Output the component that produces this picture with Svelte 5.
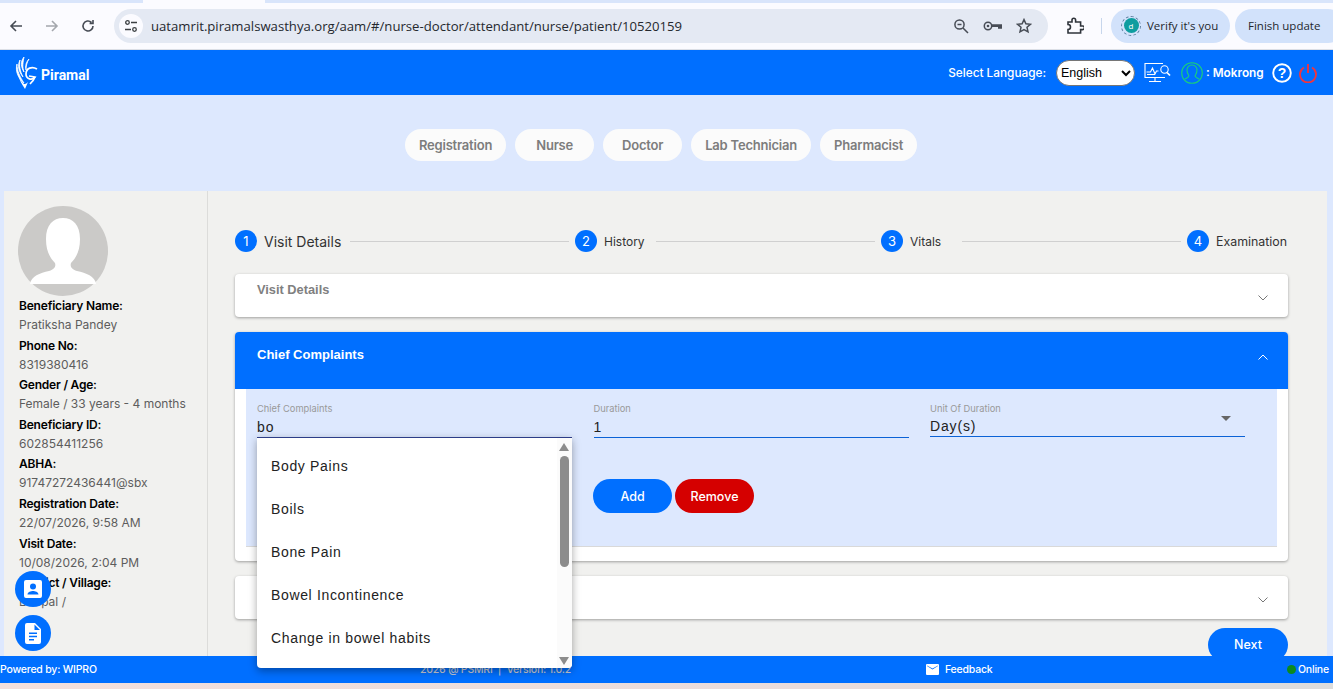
<script>
  const roles = ["Registration", "Nurse", "Doctor", "Lab Technician", "Pharmacist"];
  const steps = [
    { name: "Visit Details", width: 86 },
    { name: "History", width: 52 },
    { name: "Vitals", width: 52 },
    { name: "Examination", width: 72 },
  ];
  const info = [
    ["Beneficiary Name:", "Pratiksha Pandey"],
    ["Phone No:", "8319380416"],
    ["Gender / Age:", "Female / 33 years - 4 months"],
    ["Beneficiary ID:", "602854411256"],
    ["ABHA:", "91747272436441@sbx"],
    ["Registration Date:", "22/07/2026, 9:58 AM"],
    ["Visit Date:", "10/08/2026, 2:04 PM"],
    ["District / Village:", "Bhopal /"],
  ];
  const options = ["Body Pains", "Boils", "Bone Pain", "Bowel Incontinence", "Change in bowel habits"];
</script>

<div class="page">
  <div class="tabstrip"><span class="activetab"></span></div>
  <div class="chrome">
    <svg class="nav-icon first" viewBox="0 0 16 16"><path d="M14 8H3M8 3L3 8l5 5" fill="none" stroke="#474c55" stroke-width="1.6"/></svg>
    <svg class="nav-icon" viewBox="0 0 16 16"><path d="M2 8h11M8 3l5 5-5 5" fill="none" stroke="#a4a7ad" stroke-width="1.6"/></svg>
    <svg class="nav-icon" viewBox="0 0 16 16"><path d="M13 8a5 5 0 1 1-1.6-3.7M13 2v3.4H9.6" fill="none" stroke="#474c55" stroke-width="1.6"/></svg>
    <div class="omnibox">
      <span class="site">
        <svg width="14" height="14" viewBox="0 0 14 14"><g fill="none" stroke="#3c4043" stroke-width="1.3"><circle cx="3.5" cy="3.5" r="1.8"/><path d="M7 3.5h6M1 10.5h6"/><circle cx="10.5" cy="10.5" r="1.8"/></g></svg>
      </span>
      <span class="url">uatamrit.piramalswasthya.org/aam/#/nurse-doctor/attendant/nurse/patient/10520159</span>
      <svg class="omni-a" width="16" height="16" viewBox="0 0 16 16"><g fill="none" stroke="#474c55" stroke-width="1.5"><circle cx="6.5" cy="6.5" r="4.6"/><path d="M10 10l5 5M4.5 6.5h4"/></g></svg>
      <svg class="omni-b" width="20" height="14" viewBox="0 0 20 14"><circle cx="5" cy="7" r="3.700" fill="none" stroke="#474c55" stroke-width="1.500"/><circle cx="5" cy="7" r="1.300" fill="#474c55"/><path d="M8.500 5.200H19v4.600h-4V8H8.500z" fill="#474c55"/></svg>
      <svg class="omni-c" width="16" height="16" viewBox="0 0 16 16"><path d="M8 1.6l1.900 4.200 4.500.5-3.400 3 1 4.500L8 11.500l-4 2.300 1-4.500-3.400-3 4.500-.5z" fill="none" stroke="#474c55" stroke-width="1.500"/></svg>
    </div>
    <svg class="ext" width="18" height="18" viewBox="0 0 18 18"><path d="M2 5h4V3a1.800 1.800 0 0 1 3.600 0v2h5v4h2a1.800 1.800 0 0 1 0 3.600h-2V16H2v-3.500a2.500 2.500 0 0 0 0-5z" fill="none" stroke="#2f343b" stroke-width="1.600"/></svg>
    <span class="divider"></span>
    <span class="pill verify">
      <span class="ring"><span class="avatar-d">d</span></span>
      Verify it's you
    </span>
    <span class="pill update">Finish update</span>
  </div>

  <header>
    <div class="logo">
      <svg width="24" height="34" viewBox="0 0 24 34">
        <g fill="#fff">
          <path d="M9 1C5 6 6 11 9 16 7 11 8 6 9 1z" stroke="#fff" stroke-width=".8"/>
          <path d="M5 4C2 10 4 16 8 21 5 15 4 10 5 4z" stroke="#fff" stroke-width=".8"/>
          <path d="M2 8c-2 7 1 14 7 19-4-6-7-12-7-19z" stroke="#fff" stroke-width=".8"/>
          <path d="M14 3c-3 3-4 7-3 11 0-4 1-8 3-11z" stroke="#fff" stroke-width=".8"/>
          <path d="M3 18c1 6 4 10 7 15l3-7c-2 2-3 2-4 2-3-3-5-6-6-10z"/>
        </g>
        <path d="M22 13c-5-3-11-1-11 5 0 5 6 7 9 3l-6-1" fill="none" stroke="#fff" stroke-width="1.700"/>
        <path d="M20 21c-1 3-3 5-5 7" fill="none" stroke="#fff" stroke-width="1.700"/>
      </svg>
      <span>Piramal</span>
    </div>
    <div class="head-right">
      <span class="lang-label">Select Language:</span>
      <select class="lang"><option>English</option></select>
      <svg class="monitor" width="27" height="22" viewBox="0 0 27 22"><g fill="none" stroke="#fff" stroke-width="1.100"><path d="M19 1.500H1v14h20M11 15.500v4M5 19.500h12M2.500 10h4l2-4 2.500 6 1.500-3h2"/><path d="M3 12.500h8"/><circle cx="20.500" cy="7.500" r="3.700"/><path d="M23 10.500l3 3" stroke-width="1.700"/></g></svg>
      <svg class="user" width="22" height="22" viewBox="0 0 22 22"><g fill="none" stroke="#19d07b" stroke-width="1.100"><circle cx="11" cy="11" r="10.300"/><path d="M8 14c-1-2-2-3-2-6a5 5 0 0 1 10 0c0 3-1 4-2 6 1 2 3 2 4 3M8 14c-1 2-3 2-4 3"/></g></svg>
      <span class="username">: Mokrong</span>
      <svg class="help" width="20" height="20" viewBox="0 0 20 20"><circle cx="10" cy="10" r="8.800" fill="none" stroke="#fff" stroke-width="1.900"/><text x="10" y="15" text-anchor="middle" font-size="14" font-weight="700" fill="#fff" font-family="Liberation Sans, sans-serif">?</text></svg>
      <svg class="power" width="18" height="20" viewBox="0 0 18 20"><path d="M5 4.500a8 8 0 1 0 8 0M9 1v9" fill="none" stroke="#ee3540" stroke-width="1.900"/></svg>
    </div>
  </header>

  <nav>
    {#each roles as role}
      <span class="role">{role}</span>
    {/each}
  </nav>

  <div class="panel">
    <aside>
      <div class="photo">
        <svg width="90" height="90" viewBox="0 0 90 90"><circle cx="45" cy="45" r="45" fill="#cbcac8"/><path d="M12 78c1-8 10-11 19-13 6-2 7-5 6-8-5-5-9-12-9-24 0-14 7-21 17-21s17 7 17 21c0 12-4 19-9 24-1 3 0 6 6 8 9 2 18 5 19 13z" fill="#fff"/></svg>
      </div>
      {#each info as [label, value]}
        <div class="label">{label}</div>
        <div class="value">{value}</div>
      {/each}
    </aside>

    <main>
      <div class="stepper">
        {#each steps as step, i}
          {#if i > 0}<span class="line"></span>{/if}
          <span class="num">{i + 1}</span>
          <span class="step" class:big={i === 0} style="min-width: {step.width}px">{step.name}</span>
        {/each}
      </div>

      <section class="card closed">
        <span class="card-title">Visit Details</span>
        <svg class="chev" width="10" height="6" viewBox="0 0 10 6"><path d="M.5.500L5 5 9.500.500" fill="none" stroke="#777" stroke-width="1"/></svg>
      </section>

      <section class="card open">
        <div class="open-head">
          <span>Chief Complaints</span>
          <svg class="chev" width="10" height="6" viewBox="0 0 10 6"><path d="M.5 5.500L5 1l4.500 4.500" fill="none" stroke="#fff" stroke-width="1"/></svg>
        </div>
        <div class="open-body">
          <div class="fields">
            <div class="field">
              <span class="f-label">Chief Complaints</span>
              <div class="f-input dark">bo</div>
            </div>
            <div class="field">
              <span class="f-label">Duration</span>
              <div class="f-input">1</div>
            </div>
            <div class="field">
              <span class="f-label">Unit Of Duration</span>
              <div class="f-input unit">Day(s)<span class="caret"></span></div>
            </div>
          </div>
          <div class="actions">
            <button class="add">Add</button>
            <button class="remove">Remove</button>
          </div>

          <div class="dropdown">
            <ul>
              {#each options as option}
                <li>{option}</li>
              {/each}
            </ul>
            <div class="scroll">
              <span class="arrow up"></span>
              <span class="thumb"></span>
              <span class="arrow down"></span>
            </div>
          </div>
        </div>
      </section>

      <section class="card third">
        <svg class="chev" width="10" height="6" viewBox="0 0 10 6"><path d="M.5.500L5 5 9.500.500" fill="none" stroke="#777" stroke-width="1"/></svg>
      </section>

      <div class="next-row"><button class="next">Next</button></div>
    </main>

    <button class="fab one" aria-label="profile">
      <svg width="20" height="20" viewBox="0 0 20 20"><path fill-rule="evenodd" d="M3 1h14a2 2 0 0 1 2 2v14a2 2 0 0 1-2 2H3a2 2 0 0 1-2-2V3a2 2 0 0 1 2-2zm7 3.500a3 3 0 1 0 0 6 3 3 0 0 0 0-6zM4.500 15.500h11c0-2.500-3.500-3.500-5.500-3.500s-5.500 1-5.500 3.500z" fill="#fff"/></svg>
    </button>
    <button class="fab two" aria-label="document">
      <svg width="18" height="21" viewBox="0 0 18 21"><path fill-rule="evenodd" d="M3 0h8l6 6v13a2 2 0 0 1-2 2H3a2 2 0 0 1-2-2V2a2 2 0 0 1 2-2zm7.500 1.500V7H16zM5 9.500v1.600h8V9.500zm0 3.200v1.600h8v-1.600zm0 3.200v1.600h5v-1.600z" fill="#fff"/></svg>
    </button>
  </div>

  <footer>
    <span class="powered">Powered by: WIPRO</span>
    <span class="copy">2026 @ PSMRI &nbsp;|&nbsp; Version: 1.0.2</span>
    <span class="feedback">
      <svg width="13" height="11" viewBox="0 0 13 11"><path fill-rule="evenodd" d="M1 0h11a1 1 0 0 1 1 1v9a1 1 0 0 1-1 1H1a1 1 0 0 1-1-1V1a1 1 0 0 1 1-1zm0 2l5.500 3.500L12 2v-.5L6.500 4.500 1 1.500z" fill="#fff"/></svg>
      Feedback
    </span>
    <span class="online"><i></i>Online</span>
  </footer>
  <div class="bottom"></div>
</div>

<style>
  :global(body) {
    margin: 0;
    font-family: "Liberation Sans", Arial, sans-serif;
  }

  .page {
    position: relative;
    display: flex;
    flex-direction: column;
    width: 1333px;
    height: 689px;
    overflow: hidden;
    background: #dde8fe;
  }

  .tabstrip {
    height: 3px;
    background: #d9e5fb;
    flex: none;
  }

  .activetab {
    display: block;
    width: 122px;
    height: 3px;
    margin-left: 143px;
    background: #fbfbff;
  }

  .chrome {
    display: flex;
    align-items: center;
    flex: none;
    height: 47px;
    padding-bottom: 1px;
    box-sizing: border-box;
    background: #fbfbff;
    border-bottom: 1px solid #dcdfe6;
  }

  .nav-icon {
    width: 16px;
    height: 16px;
    margin-right: 20px;
    flex: none;
  }

  .nav-icon.first {
    margin-left: 8px;
  }

  .omnibox {
    display: flex;
    align-items: center;
    width: 934px;
    height: 34px;
    margin-left: -2px;
    border-radius: 17px;
    background: #e4e9f3;
    flex: none;
  }

  .site {
    display: flex;
    align-items: center;
    justify-content: center;
    width: 24px;
    height: 24px;
    margin-left: 5px;
    border-radius: 50%;
    background: #fbfbff;
  }

  .url {
    margin-left: 8px;
    font-family: "Open Sans", sans-serif;
    font-size: 13.150px;
    color: #24282e;
    white-space: nowrap;
    flex: 1;
  }

  .omni-a {
    margin-right: 14px;
  }

  .omni-b {
    margin-right: 13px;
  }

  .omni-c {
    margin-right: 16px;
  }

  .ext {
    margin-left: 18px;
    flex: none;
  }

  .divider {
    width: 1px;
    height: 16px;
    margin: 0 9px 0 17px;
    background: #c7d6ec;
    flex: none;
  }

  .pill {
    display: flex;
    align-items: center;
    height: 34px;
    border-radius: 17px;
    background: #d2e2fb;
    font-family: "Open Sans", sans-serif;
    font-size: 11.500px;
    color: #24282e;
    white-space: nowrap;
    flex: none;
  }

  .verify {
    width: 119px;
    gap: 6px;
    padding-left: 10px;
    box-sizing: border-box;
  }

  .update {
    width: 110px;
    margin-left: 5px;
    padding-left: 13px;
    box-sizing: border-box;
  }

  .ring {
    display: flex;
    align-items: center;
    justify-content: center;
    width: 20px;
    height: 20px;
    box-sizing: border-box;
    border: 1px dashed #5b7d9e;
    border-radius: 50%;
  }

  .avatar-d {
    display: flex;
    align-items: center;
    justify-content: center;
    width: 15px;
    height: 15px;
    border-radius: 50%;
    background: #0e9d9f;
    color: #fff;
    font-size: 8px;
  }

  header {
    display: flex;
    align-items: center;
    justify-content: space-between;
    height: 45px;
    background: #006fff;
    flex: none;
  }

  .logo {
    display: flex;
    align-items: center;
    gap: 2px;
    margin-left: 15px;
    color: #fff;
    font-family: Roboto, sans-serif;
    font-size: 14px;
    font-weight: 700;
  }

  .logo span {
    margin-top: 5px;
  }

  .head-right {
    display: flex;
    align-items: center;
    margin-right: 16px;
    color: #fff;
    font-family: Inter, sans-serif;
  }

  .lang-label {
    font-size: 11.800px;
    font-weight: 500;
  }

  .lang {
    width: 79px;
    height: 26px;
    margin-left: 10px;
    padding: 0;
    border: 1px solid #767676;
    border-radius: 13px;
    background: #fff;
    font-family: "Liberation Sans", sans-serif;
    font-size: 12.500px;
  }

  .monitor {
    margin-left: 9px;
  }

  .user {
    margin-left: 10px;
  }

  .username {
    width: 58px;
    margin-left: 3px;
    font-size: 11.800px;
    font-weight: 600;
    white-space: nowrap;
  }

  .help {
    margin-left: 8px;
  }

  .power {
    margin-left: 7px;
  }

  nav {
    display: flex;
    justify-content: center;
    gap: 9px;
    height: 96px;
    padding: 34px 11px 0 0;
    box-sizing: border-box;
    flex: none;
  }

  .role {
    min-width: 79px;
    height: 32px;
    padding: 0 14px;
    box-sizing: border-box;
    text-align: center;
    line-height: 32px;
    border-radius: 16px;
    background: #fbfbfb;
    color: #7d7d7d;
    font-family: Inter, sans-serif;
    font-size: 13px;
    font-weight: 600;
    letter-spacing: -0.2px;
  }

  .panel {
    position: relative;
    z-index: 1;
    display: flex;
    width: 1323px;
    height: 465px;
    margin-left: 4px;
    background: #f1f1ef;
    flex: none;
  }

  aside {
    width: 204px;
    padding: 15px 0 0 15px;
    box-sizing: border-box;
    border-right: 1px solid #dcdcda;
    flex: none;
    font-family: Inter, sans-serif;
  }

  .photo {
    height: 90px;
    margin-left: -1px;
  }

  .photo svg {
    display: block;
  }

  .label {
    height: 19px;
    line-height: 19px;
    color: #000;
    font-size: 12px;
    font-weight: 600;
    letter-spacing: -0.2px;
  }

  .value {
    height: 20.600px;
    line-height: 20px;
    color: #5d5d5d;
    font-size: 12px;
  }

  main {
    flex: 1;
    padding: 0 39px 0 27px;
    box-sizing: border-box;
    min-width: 0;
  }

  .stepper {
    display: flex;
    align-items: center;
    height: 22px;
    margin-top: 39px;
    font-family: Inter, sans-serif;
    font-size: 12px;
    color: #333;
  }

  .num {
    display: flex;
    align-items: center;
    justify-content: center;
    width: 22px;
    height: 22px;
    border-radius: 50%;
    background: #006fff;
    color: #fff;
    font-size: 13px;
    flex: none;
  }

  .step {
    margin-left: 7px;
    white-space: nowrap;
  }

  .step.big {
    font-size: 14px;
  }

  .step:last-child {
    font-size: 12.400px;
  }

  .line {
    flex: 1;
    height: 1px;
    margin-right: 6px;
    background: #d0d0d0;
  }

  .card {
    position: relative;
    margin-top: 15px;
    background: #fff;
    border-radius: 4px;
    box-shadow: 0 1px 3px rgba(0, 0, 0, 0.35);
  }

  .stepper + .card {
    margin-top: 22px;
  }

  .closed {
    height: 43px;
  }

  .card-title {
    position: absolute;
    left: 22px;
    top: 8px;
    color: #808080;
    font-size: 12.800px;
    font-weight: 700;
  }

  .chev {
    position: absolute;
    right: 20px;
    top: 21px;
  }

  .open {
    height: 229px;
  }

  .open-head {
    position: relative;
    height: 57px;
    border-radius: 4px 4px 0 0;
    background: #006fff;
    color: #fff;
    font-size: 13px;
    font-weight: 700;
    padding: 15px 0 0 22px;
    box-sizing: border-box;
  }

  .open-head .chev {
    top: 22px;
  }

  .open-body {
    position: relative;
    height: 157px;
    margin: 0 11px;
    padding: 0 11px;
    background: #dde8fe;
    border-bottom: 1px solid #d9d9d9;
  }

  .fields {
    display: grid;
    grid-template-columns: repeat(3, 315px);
    column-gap: 21.500px;
  }

  .field {
    padding-top: 13px;
  }

  .f-label {
    display: block;
    height: 14px;
    line-height: 13px;
    color: #999;
    font-family: Inter, sans-serif;
    font-size: 9.300px;
  }

  .f-input {
    position: relative;
    height: 22px;
    line-height: 23px;
    box-sizing: border-box;
    border-bottom: 1px solid #0b62d6;
    color: #222;
    font-family: "Liberation Sans", sans-serif;
    font-size: 14px;
    letter-spacing: 0.85px;
  }

  .f-input.dark {
    border-bottom-color: #2c3d88;
  }

  .f-input.unit {
    height: 21px;
    line-height: 21px;
  }

  .caret {
    position: absolute;
    right: 14px;
    top: 0;
    border-left: 5px solid transparent;
    border-right: 5px solid transparent;
    border-top: 5px solid #666;
  }

  .actions {
    display: flex;
    gap: 3px;
    margin: 41px 0 0 336px;
  }

  .actions button,
  .next {
    height: 34px;
    border: 0;
    border-radius: 17px;
    color: #fff;
    font-family: Inter, sans-serif;
    font-size: 12.500px;
    font-weight: 500;
  }

  .add {
    width: 79px;
    background: #006fff;
  }

  .remove {
    width: 79px;
    background: #d50000;
  }

  .dropdown {
    position: absolute;
    left: 11px;
    top: 48px;
    z-index: 5;
    display: flex;
    width: 315px;
    height: 231px;
    background: #fff;
    border-top: 1px solid #2c3d88;
    box-sizing: border-box;
    border-radius: 0 0 4px 4px;
    box-shadow: 0 3px 8px rgba(0, 0, 0, 0.35);
    overflow: hidden;
  }

  .dropdown ul {
    flex: 1;
    margin: 0;
    padding: 7px 0 0 14px;
    list-style: none;
    font-family: "Liberation Sans", sans-serif;
    font-size: 14px;
    letter-spacing: 0.65px;
    color: #222;
  }

  .dropdown li {
    height: 43.100px;
    line-height: 43px;
    white-space: nowrap;
  }

  .scroll {
    position: relative;
    width: 15px;
    background: #fbfbfb;
  }

  .thumb {
    position: absolute;
    left: 3px;
    top: 18px;
    width: 9px;
    height: 111px;
    border-radius: 5px;
    background: #8c8c8c;
  }

  .arrow {
    position: absolute;
    left: 2px;
    border-left: 5px solid transparent;
    border-right: 5px solid transparent;
  }

  .arrow.up {
    top: 5px;
    border-bottom: 8px solid #8c8c8c;
  }

  .arrow.down {
    bottom: 3px;
    border-top: 8px solid #8c8c8c;
  }

  .third {
    height: 43px;
  }

  .next-row {
    position: relative;
    z-index: -1;
    display: flex;
    justify-content: flex-end;
    margin-top: 9px;
  }

  .next-row .next {
    width: 80px;
    height: 34px;
    padding-bottom: 2px;
    background: #006fff;
  }

  .fab {
    position: absolute;
    left: 11px;
    display: flex;
    align-items: center;
    justify-content: center;
    width: 36px;
    height: 36px;
    padding: 0;
    border: 0;
    border-radius: 50%;
    background: #006fff;
  }

  .fab.one {
    top: 380px;
  }

  .fab.two {
    top: 424px;
  }

  footer {
    position: relative;
    display: flex;
    align-items: center;
    height: 27px;
    background: #006fff;
    color: #fff;
    font-family: Inter, sans-serif;
    font-size: 10.500px;
    font-weight: 500;
    letter-spacing: -0.2px;
    flex: none;
  }

  .powered {
    width: 420px;
    flex: none;
  }

  .copy {
    width: 506px;
    color: #c5c9d4;
    flex: none;
  }

  .feedback {
    display: flex;
    align-items: center;
    gap: 6px;
    width: 361px;
    flex: none;
  }

  .online {
    display: flex;
    align-items: center;
    gap: 2px;
  }

  .online i {
    width: 9px;
    height: 9px;
    flex: none;
    border-radius: 50%;
    background: #0c8a1e;
  }

  .bottom {
    flex: 1;
    background: linear-gradient(90deg, #f3dfdc, #e9dcdb 60%, #dcdcdc);
  }
</style>
